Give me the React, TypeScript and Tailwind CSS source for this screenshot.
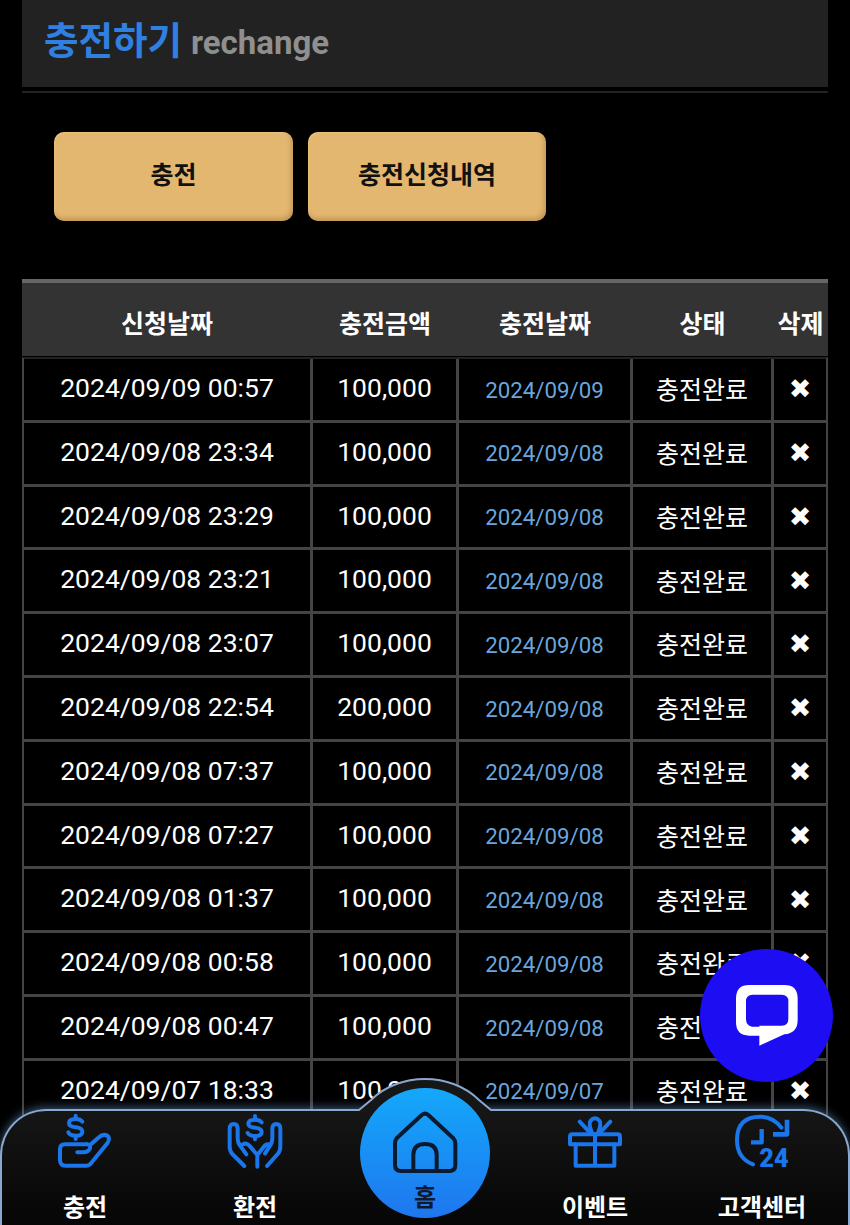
import type { ReactNode } from "react";

const rows: [string, string, string][] = [
  ["2024/09/09 00:57", "100,000", "2024/09/09"],
  ["2024/09/08 23:34", "100,000", "2024/09/08"],
  ["2024/09/08 23:29", "100,000", "2024/09/08"],
  ["2024/09/08 23:21", "100,000", "2024/09/08"],
  ["2024/09/08 23:07", "100,000", "2024/09/08"],
  ["2024/09/08 22:54", "200,000", "2024/09/08"],
  ["2024/09/08 07:37", "100,000", "2024/09/08"],
  ["2024/09/08 07:27", "100,000", "2024/09/08"],
  ["2024/09/08 01:37", "100,000", "2024/09/08"],
  ["2024/09/08 00:58", "100,000", "2024/09/08"],
  ["2024/09/08 00:47", "100,000", "2024/09/08"],
  ["2024/09/07 18:33", "100,000", "2024/09/07"],
];

const cols = "grid grid-cols-[289px_146px_174px_141px_54px]";
const cell = "flex items-center justify-center border-r-[3px] border-[#444] whitespace-nowrap";
const blue = "#1a76ea";

function HandIcon() {
  return (
    <svg width="80" height="75" viewBox="0 0 240 225" fill="none" stroke={blue} strokeWidth="12" strokeLinecap="round" strokeLinejoin="round">
      <path d="M112 50Q106 42 92 42Q72 42 72 55Q72 65 92 67Q112 69 112 80Q112 92 92 92Q74 92 70 82" />
      <path d="M92 32V42M92 92V102" />
      <path d="M125 118H60Q45 118 45 133V165Q45 182 62 182H125Q132 182 138 175L187 115Q197 100 187 92Q175 85 160 98L138 118" />
      <path d="M125 118Q138 118 135 130Q130 142 115 142H97" />
    </svg>
  );
}

function HandsIcon() {
  return (
    <svg width="80" height="75" viewBox="0 0 240 225" fill="none" stroke={blue} strokeWidth="12" strokeLinecap="round" strokeLinejoin="round">
      <path d="M140 52Q134 44 120 44Q100 44 100 56Q100 66 120 68Q140 70 140 81Q140 93 120 93Q104 93 98 84" />
      <path d="M120 33V44M120 93V103" />
      <path d="M88 183L52 147Q44 138 44 125V72Q44 57 56 57Q68 57 68 72V100Q68 112 74 120L94 148" />
      <path d="M156 183L188 147Q196 138 196 125V72Q196 57 184 57Q172 57 172 72V100Q172 112 166 120L150 146" />
      <path d="M127 185V150M127 150L103 122Q94 112 84 118M127 150L146 126Q154 114 166 120" />
    </svg>
  );
}

function GiftIcon() {
  return (
    <svg width="80" height="75" viewBox="0 0 240 225" fill="none" stroke={blue} strokeWidth="12" strokeLinecap="round" strokeLinejoin="round">
      <path d="M45 118V95Q45 88 52 88H188Q195 88 195 95V118Z" />
      <path d="M62 118V182H178V118M120 88V182" />
      <path d="M112 86Q100 58 106 48Q120 32 134 48Q140 58 128 86" />
      <path d="M74 50L108 86M166 50L132 86" />
    </svg>
  );
}

function ClockIcon() {
  return (
    <svg width="90" height="75" viewBox="0 0 270 225" fill="none" stroke={blue} strokeWidth="12" strokeLinejoin="round">
      <path d="M108 178Q60 160 60 105Q60 35 130 35Q168 35 193 68" strokeLinecap="round" />
      <path d="M210 44V88H168" strokeWidth="14" />
      <path d="M134 72V112H102" strokeWidth="13" />
      <text x="127" y="187" fill={blue} stroke="none" fontFamily="Roboto, sans-serif" fontWeight="900" fontSize="76">24</text>
    </svg>
  );
}

function HomeIcon() {
  return (
    <svg width="70" height="64" viewBox="120 105 210 192" fill="none" stroke="#0c1a30" strokeWidth="12" strokeLinejoin="round" strokeLinecap="round">
      <path d="M140 190L215 120Q225 112 235 120L310 190Q316 196 316 205V270Q316 288 298 288H153Q135 288 135 270V205Q135 196 140 190Z" />
      <path d="M190 285V240Q190 207 225 207Q260 207 260 240V285" />
    </svg>
  );
}

function NavItem({ icon, label, className }: { icon: ReactNode; label: string; className: string }) {
  return (
    <div className={"absolute top-[-6px] flex flex-col items-center " + className}>
      <div className="h-[75px]">{icon}</div>
      <div className="mt-[12px] text-[24px] font-bold leading-[32px] text-white whitespace-nowrap">{label}</div>
    </div>
  );
}

export default function App() {
  return (
    <div
      className="relative h-[1225px] w-[850px] overflow-hidden bg-black"
      style={{ fontFamily: 'Roboto, "Noto Sans CJK KR", sans-serif' }}
    >
      <div className="px-[22px]">
        <div className="flex h-[87px] items-center bg-[#222222] pl-[22px] pb-[4px]">
          <span className="text-[37.5px] font-bold leading-none text-[#2f80e0]">충전하기</span>
          <span className="ml-[9px] mt-[2px] text-[33px] font-bold leading-none text-[#8f8f8f]">rechange</span>
        </div>
        <div className="mt-[4px] h-[2px] bg-[#222222]" />

        <div className="flex gap-[15px] pl-[32px] pt-[39px]">
          <div className="flex h-[89px] w-[239px] items-center justify-center rounded-[10px] bg-[#e3b770] pb-[2px] text-[25px] font-bold text-[#111] shadow-[inset_-2px_-3px_4px_rgba(150,105,50,0.4),inset_1px_1px_2px_rgba(255,225,170,0.35)]">
            충전
          </div>
          <div className="flex h-[89px] w-[238px] items-center justify-center rounded-[10px] bg-[#e3b770] pb-[2px] text-[25px] font-bold text-[#111] shadow-[inset_-2px_-3px_4px_rgba(150,105,50,0.4),inset_1px_1px_2px_rgba(255,225,170,0.35)]">
            충전신청내역
          </div>
        </div>

        <div className="mt-[58px]">
          <div className="grid h-[77px] grid-cols-[290px_146px_174px_141px_55px] border-t-4 border-[#666666] bg-[#333333] text-[25px] font-bold text-white">
            {["신청날짜", "충전금액", "충전날짜", "상태", "삭제"].map((h) => (
              <div key={h} className="flex items-center justify-center whitespace-nowrap pt-[11px]">{h}</div>
            ))}
          </div>
          <div className="mt-px border-l-2 border-r-2 border-t-2 border-l-[#444] border-r-[#444] border-t-[#222]">
            {rows.map((r) => (
              <div key={r[0]} className={cols + " h-[63.8px] border-b-[3px] border-[#444]"}>
                <div className={cell + " pb-[3px] text-[26.5px] text-white"}>{r[0]}</div>
                <div className={cell + " pb-[3px] text-[26.5px] text-white"}>{r[1]}</div>
                <div className={cell + " pt-[2px] text-[22.3px] text-[#6aa5dc]"}>{r[2]}</div>
                <div className={cell + " pt-[3px] text-[25px] text-white"}>충전완료</div>
                <div className="flex items-center justify-center pr-[2px] text-[27px] text-white" style={{ fontFamily: '"DejaVu Sans", sans-serif' }}>✖</div>
              </div>
            ))}
          </div>
        </div>
      </div>

      {/* live chat bubble */}
      <div className="absolute left-[700px] top-[949px] z-20 flex h-[133px] w-[133px] items-center justify-center rounded-full bg-[#1c0df2]">
        <svg width="62" height="62" viewBox="165 170 186 186">
          <path d="M205 170H310Q350 170 350 210V275Q350 315 310 318L235 352V322H205Q165 322 165 282V210Q165 170 205 170Z" fill="#fff" />
          <path d="M215 199H302Q322 199 322 219V272Q322 292 302 292H235V295H213Q195 292 195 272V219Q195 199 215 199Z" fill="#1c0df2" />
        </svg>
      </div>

      {/* bottom nav */}
      <div className="absolute bottom-0 left-0 right-0 z-10 h-[116px] rounded-t-[46px] border-x-2 border-t-2 border-[#88a8d0] bg-gradient-to-b from-[#161616] to-[#060606] shadow-[0_-2px_8px_rgba(120,170,230,0.45)]">
        <NavItem icon={<HandIcon />} label="충전" className="left-[43px] w-[80px]" />
        <NavItem icon={<HandsIcon />} label="환전" className="left-[213px] w-[80px]" />
        <NavItem icon={<GiftIcon />} label="이벤트" className="left-[553px] w-[80px]" />
        <NavItem icon={<ClockIcon />} label="고객센터" className="left-[715px] w-[90px]" />
      </div>

      <svg className="absolute left-[345px] top-[1075px] z-10" width="160" height="37" viewBox="0 0 160 37" fill="none">
        <path d="M8 35H14L26 25C40 11 60 4 80 4C100 4 120 11 134 25L146 35H152V37H8Z" fill="#161616" />
        <path d="M8 35H14L26 25C40 11 60 4 80 4C100 4 120 11 134 25L146 35H152" stroke="#88a8d0" strokeWidth="2" />
      </svg>

      <div className="absolute left-[360px] top-[1088px] z-10 flex h-[130px] w-[130px] flex-col items-center rounded-full bg-gradient-to-b from-[#14a8fa] to-[#1f76ee] pt-[22px]">
        <HomeIcon />
        <div className="mt-[9px] text-[24px] font-bold leading-[30px] text-[#0c1a30]">홈</div>
      </div>
    </div>
  );
}
